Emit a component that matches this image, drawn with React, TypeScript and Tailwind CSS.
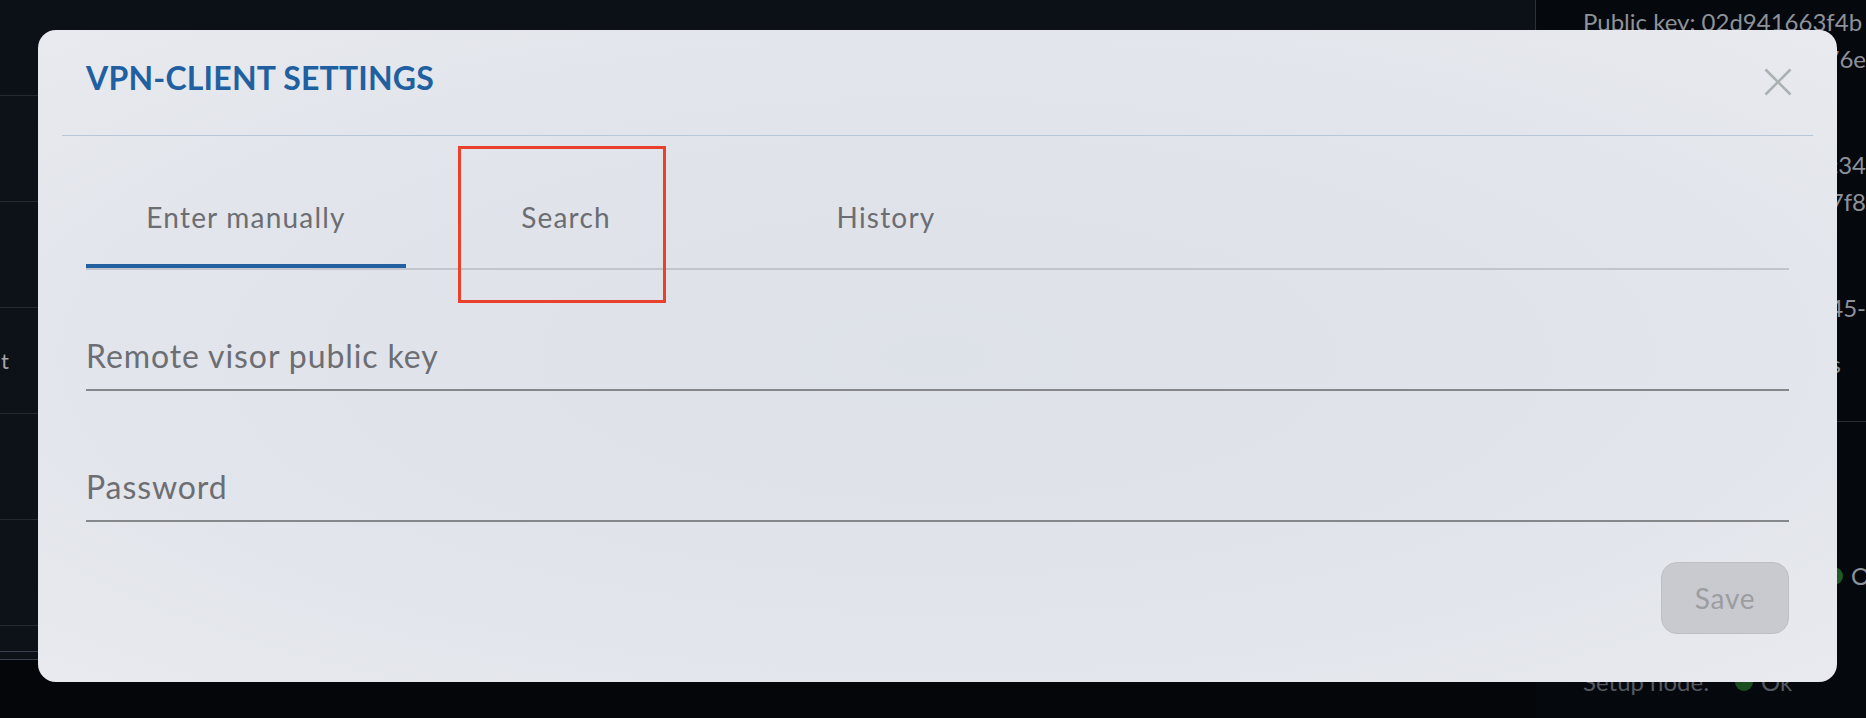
import { useState } from "react";

function CloseIcon() {
  return (
    <svg width="28" height="28" viewBox="0 0 28 28" fill="none">
      <path d="M1.5 1.5 L26.5 26.5 M26.5 1.5 L1.5 26.5" stroke="#a9b2b1" strokeWidth="2.6" />
    </svg>
  );
}

function LeftPanel() {
  const rows = ["", "", "t", "", ""];
  return (
    <div className="flex h-[660px] w-[1536px] flex-col border-r border-[#2a313d] bg-[#0d1118]">
      <div className="h-[96px] border-b border-[#252a32] bg-[#0c1017]" />
      {rows.map((label, i) => (
        <div key={i} className="flex h-[106px] items-center border-b border-[#252a32]">
          <div className="whitespace-nowrap pl-[1px] text-[22px] text-[#a2a6ad]">{label}</div>
        </div>
      ))}
      <div className="h-[26px] border-b border-[#39404d]" />
      <div className="h-[8px] border-b border-[#39404d]" />
    </div>
  );
}

function Sidebar() {
  return (
    <div className="flex flex-1 flex-col overflow-hidden whitespace-nowrap bg-[#05080c] pl-[47px] pt-[3px] text-[24px] leading-[37px] text-[#8d9199]">
      <div>Public key: 02d941663f4b</div>
      <div className="flex justify-end">9a1c3e5d7f0b2a4c76e</div>
      <div className="mt-[69px] flex justify-end">Dmsg server: 02a1c34</div>
      <div className="flex justify-end">e90d2b7f8</div>
      <div className="mt-[69px] flex justify-end">2024-03-145-</div>
      <div className="mt-[19px] flex w-[258px] justify-end">12 minutes</div>
      <div className="mt-[39px] h-px bg-[#262b34]" />
      <div className="mt-[135px] flex items-center">
        <span className="w-[242px] shrink-0">State:</span>
        <span className="h-[18px] w-[18px] shrink-0 rounded-full bg-[#1e5b24]" />
        <span className="ml-[8px] shrink-0">Online</span>
      </div>
      <div className="mt-[69px] flex items-center text-[#555a62]">
        <span className="w-[152px] shrink-0">Setup node:</span>
        <span className="h-[18px] w-[18px] shrink-0 rounded-full bg-[#1b4d20]" />
        <span className="ml-[8px] shrink-0">Ok</span>
      </div>
    </div>
  );
}

function Dialog() {
  const [active, setActive] = useState(0);
  const tabs = ["Enter manually", "Search", "History"];
  const fields = [
    { label: "Remote visor public key", gap: "mt-[67px]" },
    { label: "Password", gap: "mt-[77px]" },
  ];
  return (
    <div className="absolute left-[38px] top-[30px] h-[652px] w-[1799px] rounded-[18px] bg-[radial-gradient(ellipse_at_center,#dde1e8_0%,#e2e5eb_65%,#e8eaef_100%)] px-[24px]">
      <div className="flex h-[105px] items-start justify-between pl-[24px] pr-[21px] pt-[29px]">
        <h2 className="text-[32px] font-bold leading-[38px] tracking-[0.2px] text-[#2160a0]">
          VPN-CLIENT SETTINGS
        </h2>
        <button className="mt-[9px]">
          <CloseIcon />
        </button>
      </div>
      <div className="h-px bg-[#b7c7d8]" />

      <div className="px-[24px]">
        <div className="mt-[34px] flex border-b-2 border-[#c2c5cb]">
          {tabs.map((tab, i) => (
            <button
              key={tab}
              onClick={() => setActive(i)}
              className="flex w-[320px] flex-col items-center pt-[30px]"
            >
              <span className="text-[28px] leading-[34px] tracking-[1.2px] text-[#6b6d72]">{tab}</span>
              <span
                className={
                  i === active
                    ? "mt-[30px] h-[4px] w-full bg-[#22609f]"
                    : "mt-[30px] h-[4px] w-full bg-transparent"
                }
              />
            </button>
          ))}
        </div>

        {fields.map((f) => (
          <div
            key={f.label}
            className={`${f.gap} border-b-2 border-[#85878b] pb-[14px] text-[32px] leading-[38px] tracking-[0.9px] text-[#6c6e73]`}
          >
            {f.label}
          </div>
        ))}

        <div className="mt-[40px] flex justify-end">
          <button className="h-[72px] w-[128px] rounded-[16px] border border-[#bcbfc4] bg-[#c8cacf] text-[28px] tracking-[0.8px] text-[#9b9da1]">
            Save
          </button>
        </div>
      </div>

      {/* annotation around the Search tab */}
      <div className="absolute left-[420px] top-[116px] h-[157px] w-[208px] border-[3px] border-[#e9412b]" />
    </div>
  );
}

export default function App() {
  return (
    <div className="relative flex h-[718px] w-[1866px] overflow-hidden bg-[#04060a] font-[Lato,sans-serif]">
      <LeftPanel />
      <Sidebar />
      <Dialog />
    </div>
  );
}
